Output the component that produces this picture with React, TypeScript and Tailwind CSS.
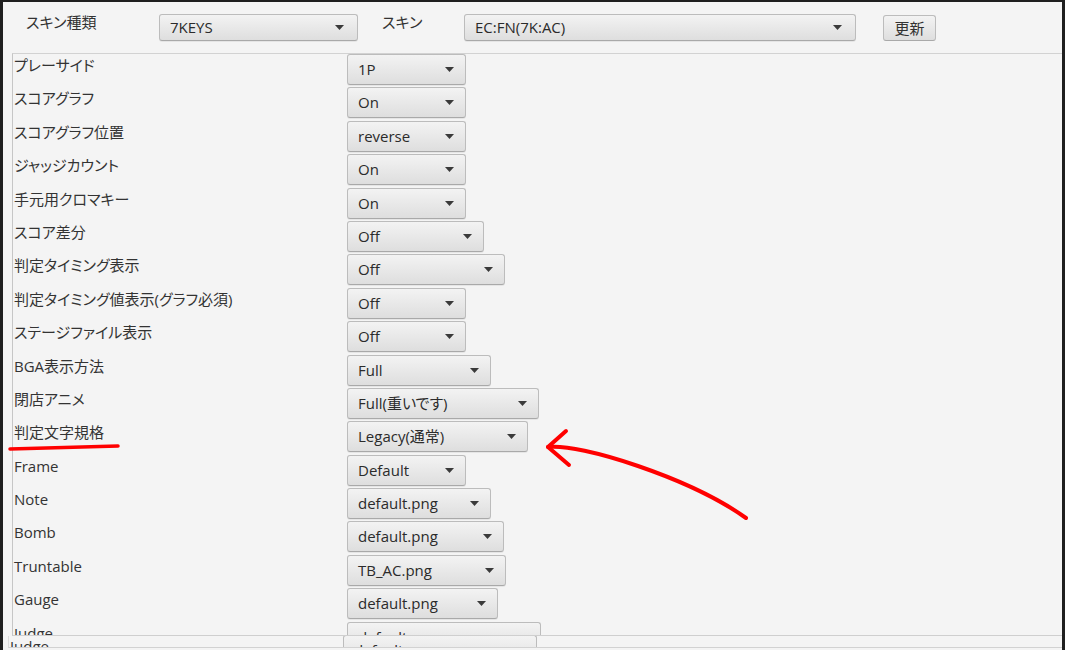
import React from "react";

const FONT =
  "[font-family:'Open_Sans','Noto_Sans_CJK_JP',sans-serif] [font-feature-settings:'palt']";

function Arrow() {
  return (
    <svg width="9" height="5" viewBox="0 0 9 5" className="shrink-0">
      <path d="M0 0 L9 0 L4.5 5 Z" fill="#3a3a3a" />
    </svg>
  );
}

function Combo({ w, value, h = "h-[31px]", pr = "pr-[11px]" }: { w: number; value: string; h?: string; pr?: string }) {
  return (
    <div
      className={`${h} ${pr} flex shrink-0 items-center justify-between rounded-[3px] border border-[#bcbcbc] border-b-[#a9a9a9] bg-gradient-to-b from-[#f3f3f3] to-[#dedede] pl-[10px] text-[15px] text-[#2b2b2b] shadow-[0_1px_0_rgba(0,0,0,0.06)]`}
      style={{ width: w }}
    >
      <span className="whitespace-nowrap leading-none">{value}</span>
      <Arrow />
    </div>
  );
}

const rows: [string, string, number][] = [
  ["プレーサイド", "1P", 119],
  ["スコアグラフ", "On", 119],
  ["スコアグラフ位置", "reverse", 119],
  ["ジャッジカウント", "On", 119],
  ["手元用クロマキー", "On", 119],
  ["スコア差分", "Off", 137],
  ["判定タイミング表示", "Off", 158],
  ["判定タイミング値表示(グラフ必須)", "Off", 119],
  ["ステージファイル表示", "Off", 119],
  ["BGA表示方法", "Full", 144],
  ["閉店アニメ", "Full(重いです)", 192],
  ["判定文字規格", "Legacy(通常)", 181],
  ["Frame", "Default", 119],
  ["Note", "default.png", 144],
  ["Bomb", "default.png", 157],
  ["Truntable", "TB_AC.png", 159],
  ["Gauge", "default.png", 151],
  ["Judge", "default", 194],
];

function Row({ label, value, w }: { label: string; value: string; w: number }) {
  return (
    <div className="flex h-[33.4px] shrink-0 items-start">
      <div className="w-[334px] shrink-0 pl-[1px] text-[15px] leading-[22px] text-[#333] whitespace-nowrap">
        {label}
      </div>
      <Combo w={w} value={value} />
    </div>
  );
}

export default function App() {
  return (
    <div className={`relative h-[650px] w-[1065px] overflow-hidden bg-[#1f1f1f] pl-[3px] pr-[3px] pt-[2px] ${FONT}`}>
      <div className="flex h-full flex-col bg-[#f4f4f4]">
        {/* top bar */}
        <div className="flex h-[51px] shrink-0 items-start">
          <div className="ml-[23px] mt-[10px] w-[133px] shrink-0 text-[15px] leading-[20px] text-[#333]">スキン種類</div>
          <div className="mt-[12px]">
            <Combo w={199} value="7KEYS" h="h-[27px]" pr="pr-[13px]" />
          </div>
          <div className="ml-[24px] mt-[10px] w-[82px] shrink-0 text-[15px] leading-[20px] text-[#333]">スキン</div>
          <div className="mt-[12px]">
            <Combo w={392} value="EC:FN(7K:AC)" h="h-[27px]" pr="pr-[13px]" />
          </div>
          <div className="ml-[27px] mt-[13px] flex h-[26px] w-[53px] items-center justify-center rounded-[3px] border border-[#bcbcbc] border-b-[#a9a9a9] bg-gradient-to-b from-[#f3f3f3] to-[#dedede] text-[15px] leading-none text-[#333]">
            更新
          </div>
        </div>

        {/* scroll pane */}
        <div className="ml-[9px] flex h-[583px] shrink-0 flex-col overflow-hidden border-b border-l border-t border-b-[#cfcfcf] border-l-[#c6c6c6] border-t-[#d2d2d2]">
          {rows.map(([l, v, w]) => (
            <Row key={l} label={l} value={v} w={w} />
          ))}
        </div>

        {/* ghost strip */}
        <div className="ml-[5px] flex h-[12px] shrink-0 flex-col overflow-hidden border-b border-l border-b-[#d2d2d2] border-l-[#dcdcdc]">
          <div className="mt-[-1px]">
            <Row label="Judge" value="default" w={194} />
          </div>
        </div>
      </div>

      {/* red annotations */}
      <svg className="pointer-events-none absolute left-0 top-0" width="1065" height="650" viewBox="0 0 1065 650">
        <path d="M10 449 Q 60 447.5 118 446" stroke="#ff0000" strokeWidth="3.5" fill="none" strokeLinecap="round" />
        <path
          d="M548 447 C 580 443, 690 478, 746 518"
          stroke="#ff0000"
          strokeWidth="4"
          fill="none"
          strokeLinecap="round"
        />
        <path d="M566 431 L548 447 L569 465" stroke="#ff0000" strokeWidth="4" fill="none" strokeLinecap="round" strokeLinejoin="round" />
      </svg>
    </div>
  );
}
